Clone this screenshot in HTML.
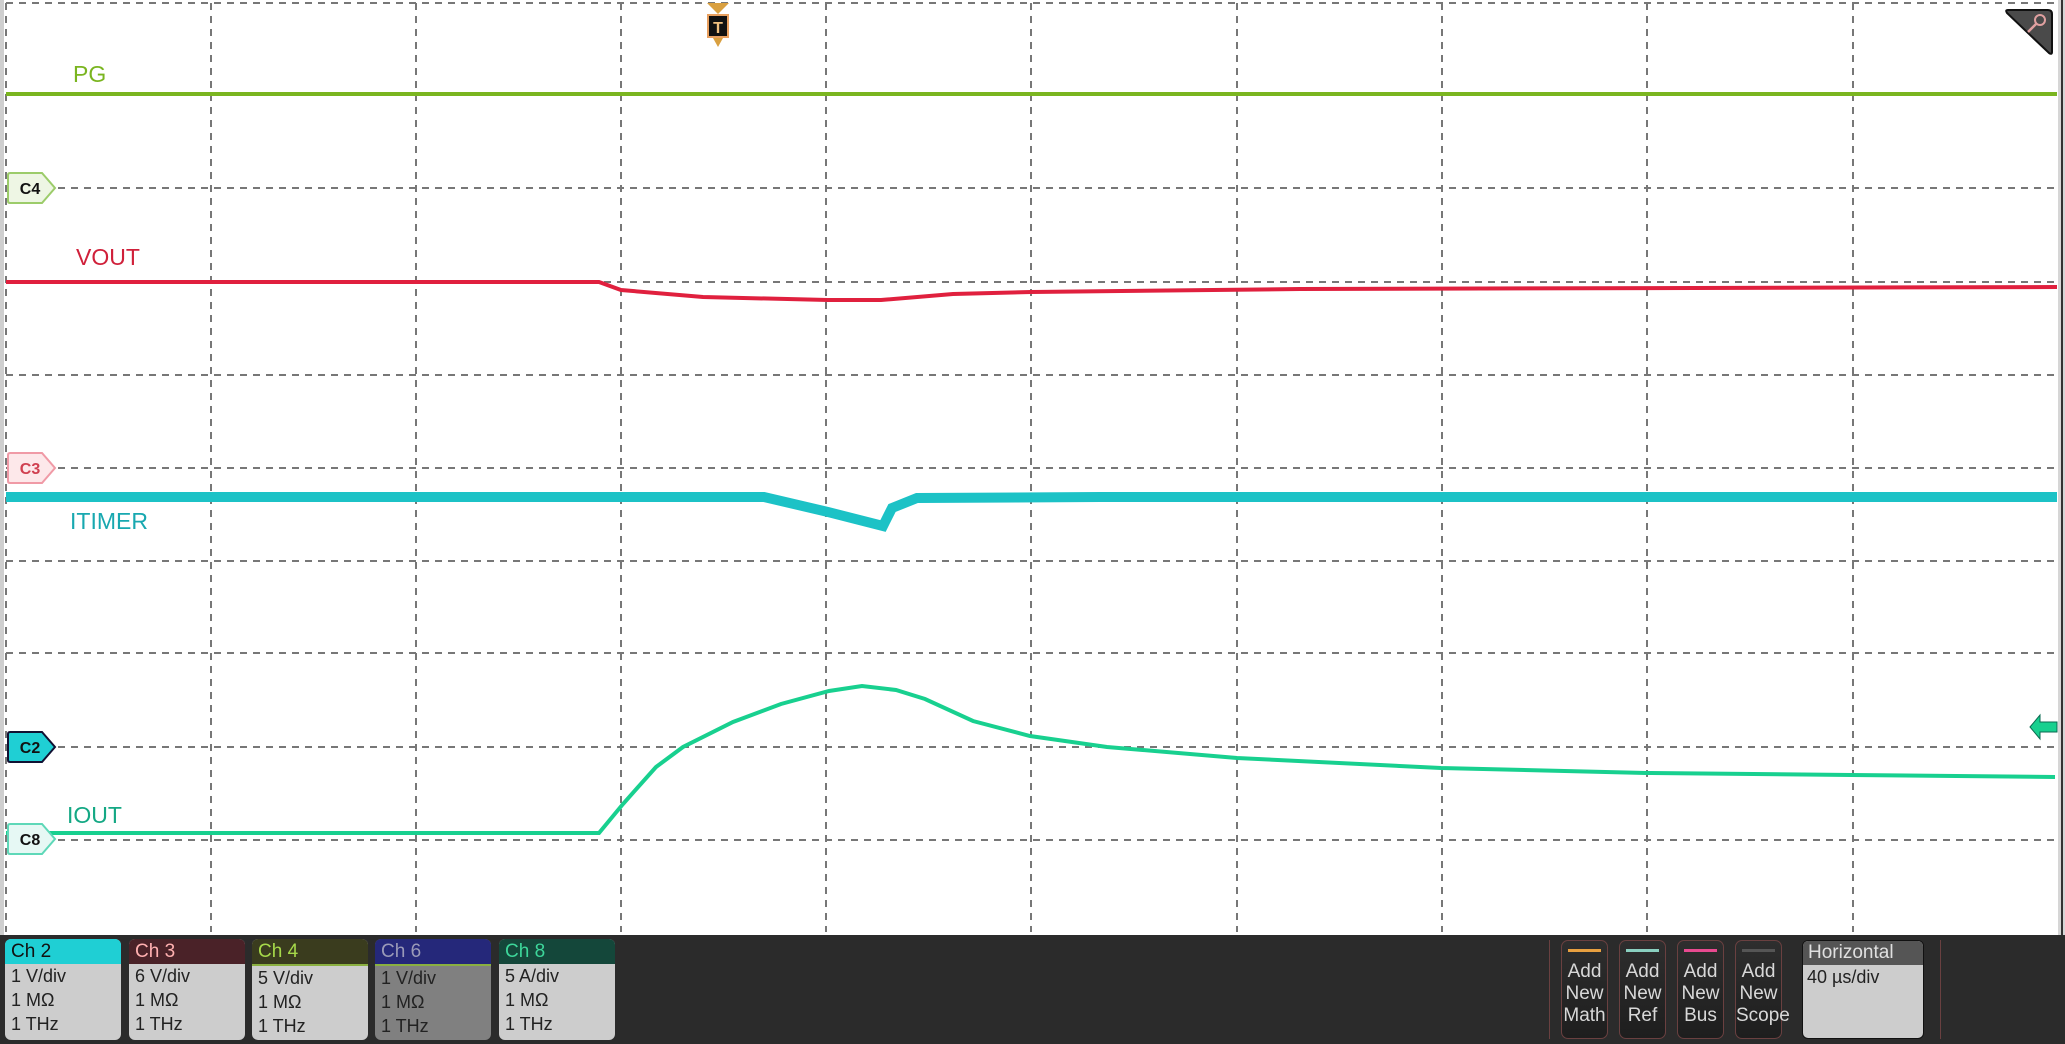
<!DOCTYPE html>
<html><head><meta charset="utf-8"><style>
html,body{margin:0;padding:0;background:#fff;width:2065px;height:1044px;overflow:hidden;font-family:"Liberation Sans",sans-serif}
.bar{position:absolute;left:0;top:935px;width:2065px;height:109px;background:#2b2b2b}
.ch{position:absolute;top:939px;width:116px;height:101px;border-radius:6px;background:#cdcdcd;overflow:hidden;font-size:18px;color:#222}
.ch .h{height:25px;line-height:25px;padding-left:6px;font-size:19px}
.ch .r{line-height:24px;padding-left:6px}
.add{position:absolute;top:940px;width:47px;height:99px;border:1px solid #6a4040;border-radius:7px;background:linear-gradient(#2e2e2e,#1e1e1e);color:#d8d8d8;font-size:19px;text-align:center;line-height:22px;box-sizing:border-box;padding-top:20px}
.add i{position:absolute;left:6px;right:6px;top:8px;height:3px}
.hz{position:absolute;left:1802px;top:940px;width:122px;height:99px;border-radius:6px;background:#cdcdcd;overflow:hidden;border:1px solid #111;box-sizing:border-box}
.sep{position:absolute;top:940px;width:1px;height:99px;background:#6a4040}
</style></head><body>
<svg width="2065" height="935" style="position:absolute;left:0;top:0">
<rect x="0" y="0" width="4" height="935" fill="#cfcfcf"/>
<rect x="2058" y="0" width="7" height="935" fill="#d6d6d6"/>
<rect x="2061" y="0" width="2" height="935" fill="#333"/>
<g stroke="#777" stroke-width="2" stroke-dasharray="7,6" fill="none">
<line x1="6" y1="3" x2="2058" y2="3"/>
<line x1="6" y1="95" x2="2058" y2="95"/>
<line x1="6" y1="188" x2="2058" y2="188"/>
<line x1="6" y1="282" x2="2058" y2="282"/>
<line x1="6" y1="375" x2="2058" y2="375"/>
<line x1="6" y1="468" x2="2058" y2="468"/>
<line x1="6" y1="561" x2="2058" y2="561"/>
<line x1="6" y1="653" x2="2058" y2="653"/>
<line x1="6" y1="747" x2="2058" y2="747"/>
<line x1="6" y1="840" x2="2058" y2="840"/>
<line x1="6" y1="3" x2="6" y2="932"/>
<line x1="211" y1="3" x2="211" y2="932"/>
<line x1="416" y1="3" x2="416" y2="932"/>
<line x1="621" y1="3" x2="621" y2="932"/>
<line x1="826" y1="3" x2="826" y2="932"/>
<line x1="1031" y1="3" x2="1031" y2="932"/>
<line x1="1237" y1="3" x2="1237" y2="932"/>
<line x1="1442" y1="3" x2="1442" y2="932"/>
<line x1="1647" y1="3" x2="1647" y2="932"/>
<line x1="1853" y1="3" x2="1853" y2="932"/>
</g>
<line x1="6" y1="94" x2="2057" y2="94" stroke="#7ab520" stroke-width="4"/>
<polyline fill="none" stroke="#e0203e" stroke-width="4" points="6,282 599,282 621,290 703,297 828,300 881,300 953,294 1031,292 1300,289 2057,287"/>
<polyline fill="none" stroke="#1cc2c6" stroke-width="10" points="6,497 764,497 828,512 883,526 892,508 917,498 1100,497 2057,497"/>
<polyline fill="none" stroke="#18d08f" stroke-width="4" points="6,833 599,833 623,804 656,767 683,747 733,722 781,704 829,691 862,686 896,690 925,699 973,721 1030,736 1107,747 1237,758 1441,768 1646,773 1851,775 2055,777"/>
<g font-family="Liberation Sans,sans-serif" font-size="23">
<text x="73" y="82" fill="#7ab520">PG</text>
<text x="76" y="265" fill="#d0203a">VOUT</text>
<text x="70" y="529" fill="#18a8b0">ITIMER</text>
<text x="67" y="823" fill="#14a884">IOUT</text>
</g>
<g font-family="Liberation Sans,sans-serif" font-size="16" font-weight="bold" text-anchor="middle">
<path d="M10,173 h32 l13,15 l-13,15 h-32 q-2,0 -2,-2 v-26 q0,-2 2,-2z" fill="#eef6e4" stroke="#9ccc6a" stroke-width="2"/>
<text x="30" y="194" fill="#111">C4</text>
<path d="M10,453 h32 l13,15 l-13,15 h-32 q-2,0 -2,-2 v-26 q0,-2 2,-2z" fill="#fde8ea" stroke="#f09aa6" stroke-width="2"/>
<text x="30" y="474" fill="#d04050">C3</text>
<path d="M10,732 h32 l13,15 l-13,15 h-32 q-2,0 -2,-2 v-26 q0,-2 2,-2z" fill="#1fcfd4" stroke="#113" stroke-width="2"/>
<text x="30" y="753" fill="#111">C2</text>
<path d="M10,824 h32 l13,15 l-13,15 h-32 q-2,0 -2,-2 v-26 q0,-2 2,-2z" fill="#e6f8f4" stroke="#5ed8b8" stroke-width="2"/>
<text x="30" y="845" fill="#111">C8</text>
</g>
<path d="M707,3 h22 l-11,11z" fill="#d9a040"/>
<rect x="708" y="15" width="20" height="22" fill="#111" stroke="#e8a060" stroke-width="2"/>
<text x="718" y="33" fill="#f0c080" font-size="16" font-weight="bold" text-anchor="middle" font-family="Liberation Sans,sans-serif">T</text>
<path d="M713,38 h10 l-5,9z" fill="#d9a040"/>
<path d="M2008,10 h40 q4,0 4,4 v38 q0,3 -3,1 l-42,-40 q-2,-3 1,-3z" fill="#4a4a4a" stroke="#111" stroke-width="2"/>
<circle cx="2040" cy="20" r="5" fill="none" stroke="#e0a0a0" stroke-width="2"/>
<line x1="2036" y1="24" x2="2028" y2="32" stroke="#e0a0a0" stroke-width="2.5"/>
<path d="M2030,727 l10,-12 v7 h17 v10 h-17 v7z" fill="#18d08f" stroke="#0a6a50" stroke-width="1"/>
</svg>
<div class="bar"></div>
<div class="ch" style="left:5px"><div class="h" style="background:#1fcfd4;color:#111">Ch 2</div><div class="r">1 V/div</div><div class="r">1 MΩ</div><div class="r">1 THz</div></div>
<div class="ch" style="left:129px"><div class="h" style="background:#4a2228;color:#ffb0b0">Ch 3</div><div class="r">6 V/div</div><div class="r">1 MΩ</div><div class="r">1 THz</div></div>
<div class="ch" style="left:252px"><div class="h" style="background:#3a3c1e;color:#a6d94a;border-bottom:2px solid #8ab040">Ch 4</div><div class="r">5 V/div</div><div class="r">1 MΩ</div><div class="r">1 THz</div></div>
<div class="ch" style="left:375px;background:#808080"><div class="h" style="background:#25287a;color:#9a9ab8;border-bottom:2px solid #8ab040">Ch 6</div><div class="r">1 V/div</div><div class="r">1 MΩ</div><div class="r">1 THz</div></div>
<div class="ch" style="left:499px"><div class="h" style="background:#14473a;color:#3dd69a">Ch 8</div><div class="r">5 A/div</div><div class="r">1 MΩ</div><div class="r">1 THz</div></div>
<div class="sep" style="left:1549px"></div>
<div class="add" style="left:1561px"><i style="background:#e8a040"></i>Add<br>New<br>Math</div>
<div class="add" style="left:1619px"><i style="background:#8ad0c0"></i>Add<br>New<br>Ref</div>
<div class="add" style="left:1677px"><i style="background:#e84a90"></i>Add<br>New<br>Bus</div>
<div class="add" style="left:1735px"><i style="background:#555"></i>Add<br>New<br>Scope</div>
<div class="hz"><div style="background:#555;color:#e0e0e0;height:24px;line-height:24px;padding-left:5px;font-size:19px">Horizontal</div><div style="padding-left:4px;font-size:18px;line-height:24px;color:#222">40 µs/div</div></div>
<div class="sep" style="left:1940px"></div>
</body></html>
